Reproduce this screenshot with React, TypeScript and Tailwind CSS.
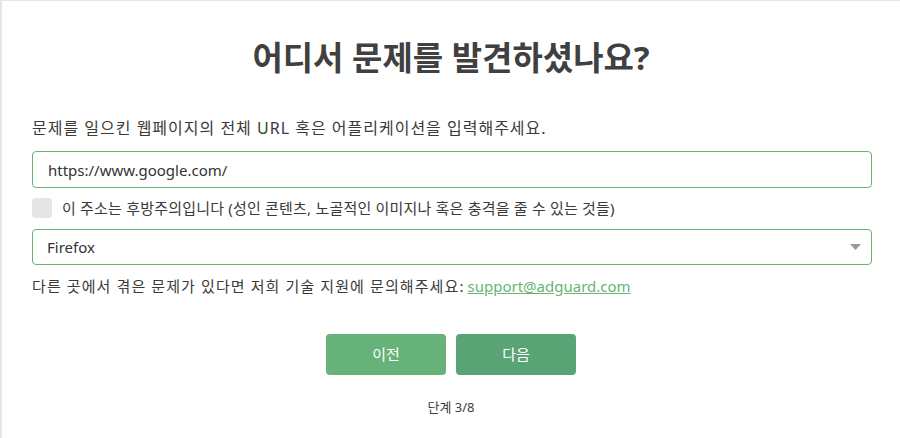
import React from 'react';

const font = { fontFamily: '"Noto Sans", "Noto Sans CJK KR", sans-serif' };

export default function App() {
  return (
    <div
      className="w-[900px] h-[438px] bg-white border-t border-l-2 border-[#e6e6e6] text-[#333]"
      style={font}
    >
      <div className="px-[30px]">
        <h1 className="pt-[32px] text-center text-[33px] leading-[50px] font-bold text-[#404040]">
          어디서 문제를 발견하셨나요?
        </h1>

        <p className="mt-[34px] text-[16px] tracking-[1px] leading-[22px] text-[#3a3a3a]">
          문제를 일으킨 웹페이지의 전체 URL 혹은 어플리케이션을 입력해주세요.
        </p>

        <input
          className="mt-[12px] block w-[840px] h-[37px] rounded-[4px] border border-[#66b574] px-[15px] text-[15px] text-[#333] outline-none"
          defaultValue="https://www.google.com/"
        />

        <label className="mt-[10px] flex items-center gap-[10px] text-[15px] tracking-[0.2px] leading-[20px] text-[#3a3a3a]">
          <span className="w-[20px] h-[20px] rounded-[3px] bg-[#e6e6e6]" />
          이 주소는 후방주의입니다 (성인 콘텐츠, 노골적인 이미지나 혹은 충격을 줄 수 있는 것들)
        </label>

        <div className="mt-[11px] flex items-center justify-between w-[840px] h-[36px] rounded-[4px] border border-[#66b574] pl-[14px] pr-[10px] text-[15px] text-[#333]">
          <span>Firefox</span>
          <svg width="11" height="6" viewBox="0 0 11 6">
            <path d="M0 0 L11 0 L5.5 6 Z" fill="#999" />
          </svg>
        </div>

        <p className="mt-[10px] text-[15px] leading-[22px] text-[#3a3a3a]">
          <span className="tracking-[1.1px]">다른 곳에서 겪은 문제가 있다면 저희 기술 지원에 문의해주세요:</span>
          <a href="#" className="ml-[3px] text-[#66b574] underline">
            support@adguard.com
          </a>
        </p>

        <div className="mt-[37px] flex justify-center gap-[10px]">
          <button className="w-[120px] h-[41px] rounded-[4px] bg-[#67b279] text-white text-[15px]">
            이전
          </button>
          <button className="w-[120px] h-[41px] rounded-[4px] bg-[#58a474] text-white text-[15px]">
            다음
          </button>
        </div>

        <p className="mt-[22px] text-center text-[13px] leading-[20px] text-[#404040]">단계 3/8</p>
      </div>
    </div>
  );
}
